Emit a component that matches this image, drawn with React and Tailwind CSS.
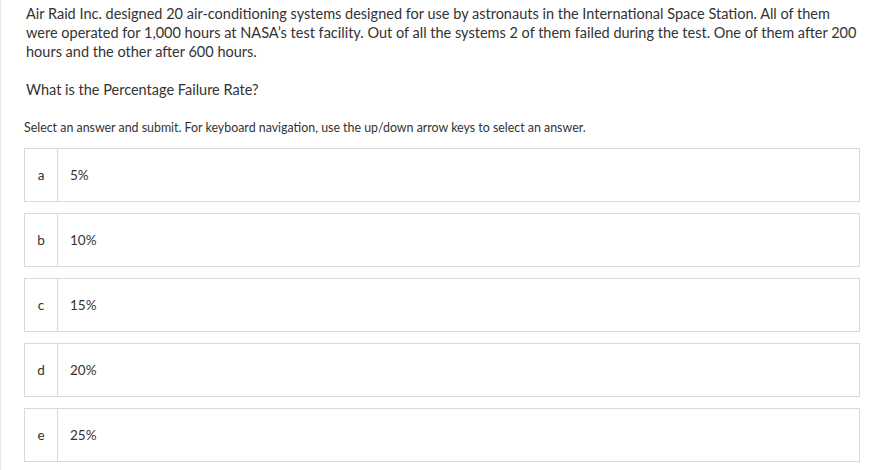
import React from "react";

const answers = [
  { key: "a", text: "5%" },
  { key: "b", text: "10%" },
  { key: "c", text: "15%" },
  { key: "d", text: "20%" },
  { key: "e", text: "25%" },
];

function AnswerOption({ letter, text }) {
  return (
    <div className="flex h-[54px] w-[836px] items-stretch border border-[#d9d9dd] bg-white">
      <div className="flex w-[33px] items-center justify-center border-r border-[#d9d9dd] text-[13.5px] text-[#333]">
        {letter}
      </div>
      <div className="flex items-center pl-[12px] text-[13.5px] text-[#333]">{text}</div>
    </div>
  );
}

export default function App() {
  return (
    <div
      className="min-h-[470px] w-[871px] border-l border-[#e6e6e6] bg-white"
      style={{ fontFamily: "Lato, 'Noto Sans', sans-serif" }}
    >
      <div className="pl-[23px] pt-[4px]">
        <div className="w-[834px] pl-[2px] text-[14.5px] leading-[19px] text-[#333]">
          <p>
            Air Raid Inc. designed 20 air-conditioning systems designed for use by astronauts in the
            International Space Station. All of them were operated for 1,000 hours at NASA’s test
            facility. Out of all the systems 2 of them failed during the test. One of them after 200
            hours and the other after 600 hours.
          </p>
          <p className="mt-[19px]">What is the Percentage Failure Rate?</p>
        </div>

        <p className="mt-[20px] text-[12.4px] leading-[18px] text-[#333]">
          Select an answer and submit. For keyboard navigation, use the up/down arrow keys to select an
          answer.
        </p>

        <div className="mt-[11px] flex flex-col gap-[11px]">
          {answers.map((a) => (
            <AnswerOption key={a.key} letter={a.key} text={a.text} />
          ))}
        </div>
      </div>
    </div>
  );
}
